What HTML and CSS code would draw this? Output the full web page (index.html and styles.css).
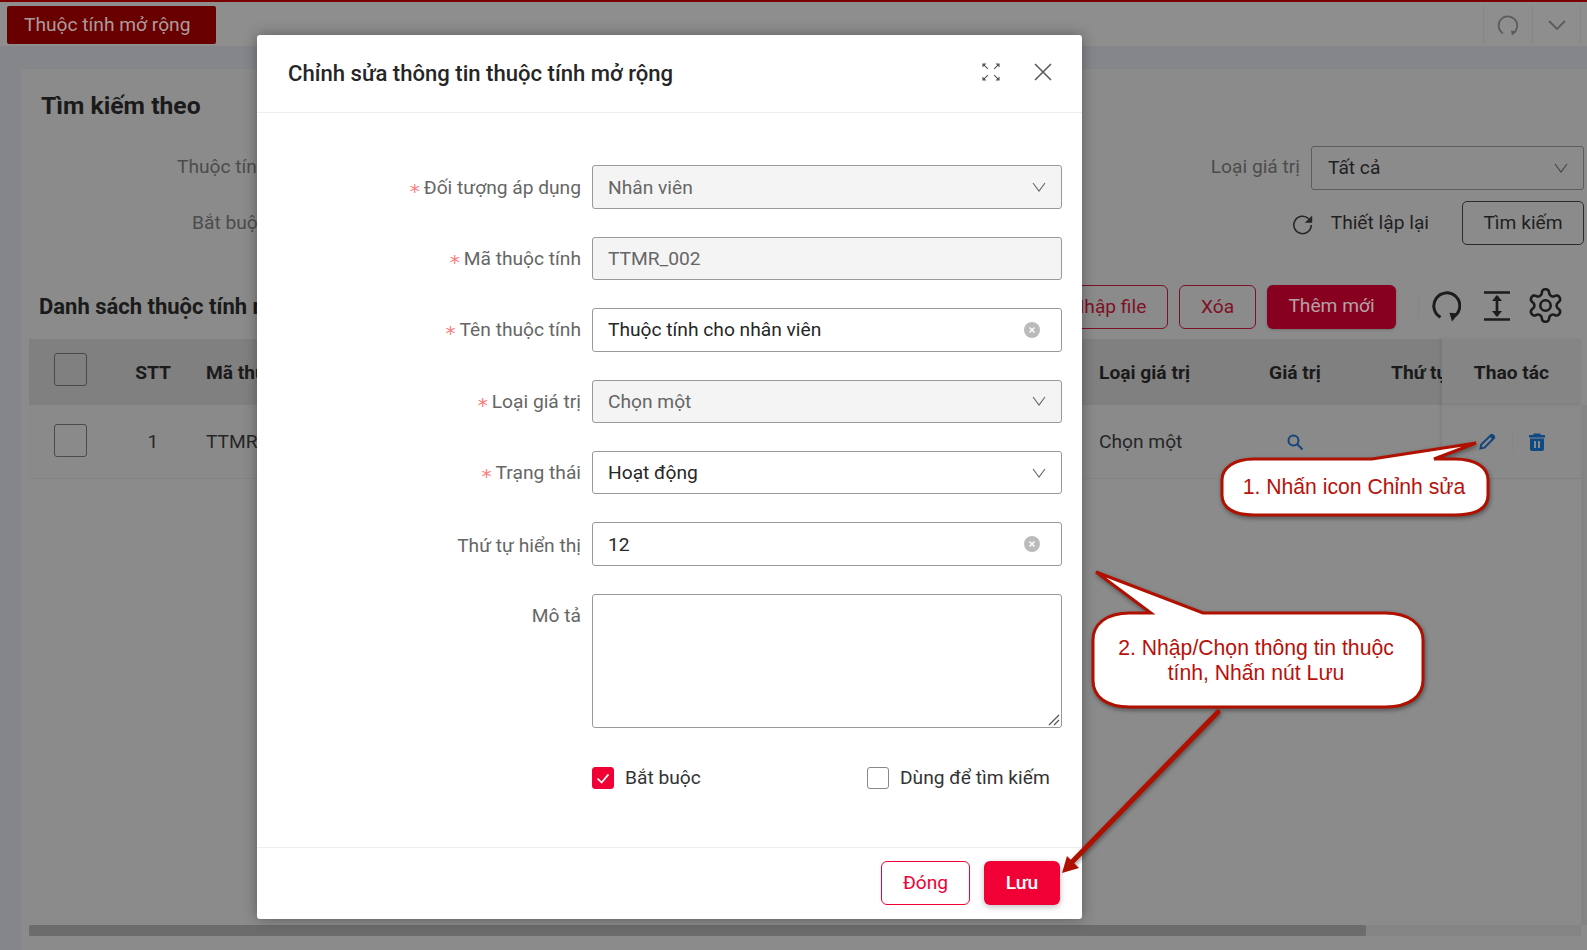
FILE: index.html
```html
<!DOCTYPE html>
<html lang="vi">
<head>
<meta charset="utf-8">
<title>Thuộc tính mở rộng</title>
<link rel="stylesheet" href="styles.css">
</head>
<body>
<div class="page">
  <header class="topbar">
    <div class="tab">Thuộc tính mở rộng</div>
    <div class="top-actions">
      <div class="top-cell"><svg class="i-top" viewBox="0 0 24 24"><path d="M7 20.5A9.3 9.3 0 1 1 17.5 20"/><path class="solid" d="M20.5 18.5l-5.5-1 1 5z"/></svg></div>
      <div class="top-cell"><svg class="i-top" viewBox="0 0 24 24"><path d="M4 8l8 8 8-8"/></svg></div>
    </div>
  </header>
  <main class="card">
    <h2 class="search-title">Tìm kiếm theo</h2>
    <div class="search-row">
      <span class="s-label s-left">Thuộc tính</span>
      <div class="s-right">
        <span class="s-label">Loại giá trị</span>
        <div class="s-select"><span>Tất cả</span><svg class="chev" viewBox="0 0 14 10"><path d="M1 1l6 8 6-8"/></svg></div>
      </div>
    </div>
    <div class="search-row second">
      <span class="s-label s-left short">Bắt buộc</span>
      <div class="s-right">
        <svg class="i-reset" viewBox="0 0 24 24"><path d="M21 12a9.500 9.500 0 1 1-2.800-6.800"/><path class="solid" d="M22 1.500v8h-8z"/></svg>
        <span class="s-reset">Thiết lập lại</span>
        <div class="btn-search">Tìm kiếm</div>
      </div>
    </div>
    <div class="list-bar">
      <h3 class="list-title">Danh sách thuộc tính mở rộng</h3>
      <div class="list-actions">
        <div class="btn-line wide">Nhập file</div>
        <div class="btn-line">Xóa</div>
        <div class="btn-solid">Thêm mới</div>
        <span class="vsep"></span>
        <svg class="i-tool reload" viewBox="0 0 30 32"><path d="M9.500 27.200A13 13 0 1 1 24.500 25.500"/><path class="solid" d="M27.500 23.500l-9-.8 2.500 8.800z"/></svg>
        <svg class="i-tool" viewBox="0 0 30 32"><path d="M2 2.500h26M2 29.500h26M15 6v20"/><path class="solid" d="M15 5l5 6h-10zM15 27l-5-6h10z"/></svg>
        <svg class="i-tool gear" viewBox="0 0 24 24"><path d="M12.220 2h-.44a2 2 0 0 0-2 2v.18a2 2 0 0 1-1 1.730l-.43.25a2 2 0 0 1-2 0l-.15-.08a2 2 0 0 0-2.730.73l-.22.38a2 2 0 0 0 .73 2.730l.15.1a2 2 0 0 1 1 1.720v.51a2 2 0 0 1-1 1.740l-.15.09a2 2 0 0 0-.73 2.730l.22.38a2 2 0 0 0 2.730.73l.15-.08a2 2 0 0 1 2 0l.43.25a2 2 0 0 1 1 1.730V20a2 2 0 0 0 2 2h.44a2 2 0 0 0 2-2v-.18a2 2 0 0 1 1-1.730l.43-.25a2 2 0 0 1 2 0l.15.08a2 2 0 0 0 2.730-.73l.22-.39a2 2 0 0 0-.73-2.730l-.15-.08a2 2 0 0 1-1-1.740v-.5a2 2 0 0 1 1-1.740l.15-.09a2 2 0 0 0 .73-2.730l-.22-.38a2 2 0 0 0-2.730-.73l-.15.08a2 2 0 0 1-2 0l-.43-.25a2 2 0 0 1-1-1.730V4a2 2 0 0 0-2-2z"/><circle cx="12" cy="12" r="3.200"/></svg>
      </div>
    </div>
    <div class="table">
      <div class="t-row t-head">
        <div class="c-check"><span class="box"></span></div>
        <div class="c-stt">STT</div>
        <div class="c-ma">Mã thuộc tính</div>
        <div class="c-ten">Tên thuộc tính</div>
        <div class="c-loai">Loại giá trị</div>
        <div class="c-gt">Giá trị</div>
        <div class="c-tt">Thứ tự hiển thị</div>
        <div class="c-act">Thao tác</div>
      </div>
      <div class="t-row t-body">
        <div class="c-check"><span class="box"></span></div>
        <div class="c-stt">1</div>
        <div class="c-ma">TTMR_002</div>
        <div class="c-ten">Thuộc tính cho nhân viên</div>
        <div class="c-loai">Chọn một</div>
        <div class="c-gt"><svg class="i-blue" viewBox="0 0 18 18"><circle cx="7.500" cy="7.500" r="5"/><path d="M11 11l5.500 5.500"/></svg></div>
        <div class="c-tt"></div>
        <div class="c-act">
          <svg class="i-blue pencil" viewBox="0 0 18 18"><path d="M2.500 15.500l.8-4L12.800 2.200a1.400 1.400 0 0 1 2 0l1 1a1.400 1.400 0 0 1 0 2L6.500 14.700z"/><path class="solid" d="M11.500 3.500l3 3 1.500-1.500a1.400 1.400 0 0 0 0-2l-1-1a1.400 1.400 0 0 0-2 0z"/></svg>
          <span class="act-sep"></span>
          <svg class="i-trash" viewBox="0 0 16 18"><path d="M5 0.500h6l1 1.500H16v2.500H0V2h4zM1 5.500h14V16a2 2 0 0 1-2 2H3a2 2 0 0 1-2-2zM5 8v7h2V8zM9 8v7h2V8z"/></svg>
        </div>
      </div>
    </div>
    <div class="h-track"><div class="h-thumb"></div></div>
    <div class="v-track"></div>
  </main>
</div>

<section class="modal">
  <div class="m-head">
    <h1 class="m-title">Chỉnh sửa thông tin thuộc tính mở rộng</h1>
    <svg class="i-expand" viewBox="0 0 20 20"><path d="M1.500 1.500l5 5M18.500 1.500l-5 5M1.500 18.500l5-5M18.500 18.500l-5-5"/><path class="solid" d="M0.500 0.500h4.500l-4.500 4.500zM19.500 0.500v4.500l-4.500-4.500zM0.500 19.500v-4.500l4.500 4.500zM19.500 19.500h-4.500l4.500-4.500z"/></svg>
    <svg class="i-close" viewBox="0 0 18 18"><path d="M1 1l16 16M17 1L1 17"/></svg>
  </div>
  <div class="m-body">
    <div class="f-row"><label class="f-label"><i>*</i>Đối tượng áp dụng</label><div class="f-input off"><span>Nhân viên</span><svg class="chev" viewBox="0 0 14 10"><path d="M1 1l6 8 6-8"/></svg></div></div>
    <div class="f-row"><label class="f-label"><i>*</i>Mã thuộc tính</label><div class="f-input off"><span>TTMR_002</span></div></div>
    <div class="f-row"><label class="f-label"><i>*</i>Tên thuộc tính</label><div class="f-input"><span>Thuộc tính cho nhân viên</span><svg class="i-clear" viewBox="0 0 16 16"><circle cx="8" cy="8" r="8"/><path d="M5.500 5.500l5 5M10.500 5.500l-5 5"/></svg></div></div>
    <div class="f-row"><label class="f-label"><i>*</i>Loại giá trị</label><div class="f-input off"><span>Chọn một</span><svg class="chev" viewBox="0 0 14 10"><path d="M1 1l6 8 6-8"/></svg></div></div>
    <div class="f-row"><label class="f-label"><i>*</i>Trạng thái</label><div class="f-input"><span>Hoạt động</span><svg class="chev" viewBox="0 0 14 10"><path d="M1 1l6 8 6-8"/></svg></div></div>
    <div class="f-row"><label class="f-label">Thứ tự hiển thị</label><div class="f-input"><span>12</span><svg class="i-clear" viewBox="0 0 16 16"><circle cx="8" cy="8" r="8"/><path d="M5.500 5.500l5 5M10.500 5.500l-5 5"/></svg></div></div>
    <div class="f-row tall"><label class="f-label">Mô tả</label><div class="f-area"><svg class="i-grip" viewBox="0 0 12 12"><path d="M1 11L11 1M6 11l5-5"/></svg></div></div>
    <div class="f-checks">
      <div class="f-check first"><span class="cb on"><svg viewBox="0 0 22 22"><path d="M5 11.500l4.500 4.500 7.500-9"/></svg></span>Bắt buộc</div>
      <div class="f-check"><span class="cb"></span>Dùng để tìm kiếm</div>
    </div>
  </div>
  <div class="m-foot">
    <div class="btn-close">Đóng</div>
    <div class="btn-save">Lưu</div>
  </div>
</section>

<svg class="notes" viewBox="0 0 1587 950">
  <path class="bubble" d="M1254 459L1372 459L1476 443L1434 459L1454 459C1477 459 1488 468 1488 480L1488 495C1488 508 1477 515 1454 515L1254 515C1234 515 1222 508 1222 495L1222 480C1222 468 1234 459 1254 459Z"/>
  <text class="note-text" x="1354" y="494">1. Nhấn icon Chỉnh sửa</text>
  <path class="bubble" d="M1130 613L1151 613L1096 572L1203 613L1385 613C1410 613 1423 625 1423 640L1423 680C1423 696 1410 707 1385 707L1130 707C1105 707 1093 696 1093 680L1093 640C1093 625 1105 613 1130 613Z"/>
  <text class="note-text" x="1256" y="655">2. Nhập/Chọn thông tin thuộc</text>
  <text class="note-text" x="1256" y="680">tính, Nhấn nút Lưu</text>
  <path class="arrow-line" d="M1218 712L1072 862"/>
  <path class="arrow-head" d="M1062 873L1067 856L1079 868Z"/>
</svg>
</body>
</html>
```
FILE: styles.css
```css
* { box-sizing: border-box; }
html, body { margin: 0; height: 100%; overflow: hidden; }
body { font-family: Roboto, "Noto Sans", sans-serif; font-size: 19.200px; color: #1f1f1f; background: #85868a; }
h1, h2, h3 { margin: 0; font-weight: 500; }

.page { height: 950px; display: flex; flex-direction: column; }
.topbar { height: 46px; flex: none; border-top: 2px solid #7a0000; background: #8e8e8e; display: flex; justify-content: space-between; padding: 4px 6px 2px 7px; }
.tab { width: 209px; height: 38px; line-height: 38px; padding-left: 17px; background: #690000; color: #ab9c9c; border-radius: 2px; }
.top-actions { display: flex; }
.top-cell { width: 49px; height: 38px; border-left: 1px solid #858585; display: flex; align-items: center; justify-content: center; }
.top-cell:last-child { border-right: 1px solid #858585; }
.i-top { width: 24px; height: 24px; fill: none; stroke: #5c5c5c; stroke-width: 1.800; }
.i-top .solid { fill: #5c5c5c; stroke: none; }

.card { flex: 1; margin: 23px 0 0 21px; background: #8b8b8b; display: flex; flex-direction: column; position: relative; }
.search-title { font-size: 24.700px; font-weight: 700; line-height: 30px; margin: 22px 0 0 20px; color: #1a1a1a; }
.search-row { height: 44px; margin: 24.500px 3px 0 0; display: flex; align-items: center; justify-content: space-between; }
.search-row.second { margin-top: 11.500px; }
.s-label { color: #4c4c4c; margin-bottom: 2px; }
.s-left { margin-left: 156px; }
.s-left.short { margin-left: 171px; }
.s-right { display: flex; align-items: center; }
.s-select { width: 273px; height: 44px; margin-left: 11px; border: 1px solid #5c5c5c; border-radius: 3px; display: flex; align-items: center; justify-content: space-between; padding: 0 15px 1px 16px; color: #1f1f1f; }
.chev { width: 14px; height: 10px; fill: none; stroke: #666; stroke-width: 1.100; flex: none; }
.s-select .chev { stroke: #444; margin-top: 2px; }
.i-reset { width: 22px; height: 22px; margin-top: 4px; fill: none; stroke: #262626; stroke-width: 1.700; }
.i-reset .solid { fill: #262626; stroke: none; }
.s-reset { margin: 0 33px 2px 17px; color: #1f1f1f; }
.btn-search { width: 122px; height: 44px; line-height: 41px; text-align: center; border: 1px solid #2a2a2a; border-radius: 5px; color: #1f1f1f; }

.list-bar { height: 44px; margin: 40px 0 0 18px; display: flex; align-items: center; justify-content: space-between; padding-right: 22px; }
.list-title { font-size: 22px; font-weight: 700; line-height: 40px; color: #1a1a1a; }
.list-actions { display: flex; align-items: center; }
.btn-line, .btn-solid { height: 44px; line-height: 42px; text-align: center; border-radius: 6px; }
.btn-line { width: 77px; margin-right: 11px; border: 1px solid #7f1026; color: #7f1026; }
.btn-line.wide { width: 128px; padding-left: 9px; }
.btn-solid { width: 129px; background: #880020; color: #b3a1a6; box-shadow: 0 1px 3px rgba(0,0,0,.2); }
.vsep { width: 1px; height: 24px; margin: 0 12px 0 22px; background: #858585; }
.i-tool { width: 30px; height: 32px; margin: 0 0 2px 0; fill: none; stroke: #1c1c1c; stroke-width: 2.700; }
.i-tool .solid { fill: #1c1c1c; stroke: none; }
.i-tool.reload { margin-right: 21px; stroke-width: 3; }
.i-tool.gear { width: 39px; height: 39px; margin: 0 0 3px 14px; stroke-width: 1.600; }

.table { margin: 10px 6px 0 8px; }
.t-row { display: grid; grid-template-columns: 96px 56px 350px 550px 164px 100px 97px 139px; align-items: center; }
.t-head { height: 66px; background: #808080; font-weight: 700; color: #1a1a1a; }
.t-body { height: 74px; border-bottom: 1px solid #858585; background: #8a8a8a; color: #262626; }
.t-row > div { height: 100%; display: flex; align-items: center; white-space: nowrap; overflow: hidden; }
.t-head .c-check { padding-bottom: 5px; }
.t-body .c-check { padding-bottom: 2px; }
.c-check { padding-left: 25px; }
.box { width: 33px; height: 33px; border: 1px solid #4a4a4a; border-radius: 3px; }
.t-row .c-stt, .t-row .c-gt { justify-content: center; }
.c-ma { padding-left: 25px; }
.c-ten { padding-left: 25px; }
.c-loai { padding-left: 18px; }
.c-tt { padding-left: 46px; }
.t-row .c-act { justify-content: center; gap: 13px; box-shadow: -2px 0 3px rgba(0,0,0,.08); }
.t-head .c-act { background: #858585; }
.t-body .c-act { padding-right: 1px; }
.i-blue { width: 18px; height: 18px; fill: none; stroke: #15457d; stroke-width: 2; }
.i-blue .solid { fill: #15457d; stroke: none; }
.act-sep { width: 1px; height: 18px; background: #858585; margin: 0 3px; }
.i-trash { width: 16px; height: 18px; fill: #0f4a85; fill-rule: evenodd; }
.h-track { margin: auto 6px 14px 8px; height: 11px; background: #848484; }
.h-thumb { width: 1337px; height: 11px; background: #6c6c6c; border-radius: 2px; }
.v-track { position: absolute; right: 0; top: 336px; bottom: 25px; width: 6px; background: #848484; }

.modal { position: absolute; left: 257px; top: 35px; width: 825px; height: 884px; background: #fff; border-radius: 3px; box-shadow: 0 0 14px rgba(0,0,0,.35); display: flex; flex-direction: column; }
.m-head { height: 78px; flex: none; border-bottom: 1px solid #eee; display: flex; align-items: center; padding: 0 30px 0 31px; }
.m-title { flex: 1; font-size: 22.100px; color: #262626; margin-bottom: 2px; }
.i-expand { width: 18px; height: 18px; stroke: #555; stroke-width: 1.200; fill: none; margin: -4px 34px 0 0; }
.i-expand .solid { fill: #555; stroke: none; }
.i-close { width: 18px; height: 18px; fill: none; stroke: #555; stroke-width: 1.500; margin-top: -4px; }
.m-body { flex: 1; padding: 52.400px 20px 0 0; display: flex; flex-direction: column; gap: 28px; }
.f-row { display: grid; grid-template-columns: 324px 470px; column-gap: 11px; height: 43.400px; align-items: center; }
.f-row.tall { height: 134px; align-items: start; }
.f-label { text-align: right; color: #666; padding-top: 2px; }
.f-row.tall .f-label { padding-top: 10px; }
.f-label i { font-style: normal; color: #ff7a7a; margin-right: 4px; font-family: "DejaVu Sans", sans-serif; font-size: 20px; line-height: 1; vertical-align: -4px; }
.f-input { height: 43.400px; border: 1px solid #999; border-radius: 3px; display: flex; align-items: center; justify-content: space-between; padding: 0 15px; color: #262626; }
.f-input.off { background: #f4f4f4; color: #666; }
.i-clear { width: 16px; height: 16px; margin-right: 6px; fill: #bbb; }
.i-clear path { stroke: #fff; stroke-width: 1.400; fill: none; }
.f-area { height: 134px; border: 1px solid #999; border-radius: 3px; display: flex; align-items: flex-end; justify-content: flex-end; padding: 0 1px 1px 0; }
.i-grip { width: 12px; height: 12px; fill: none; stroke: #555; stroke-width: 1.200; }
.f-checks { display: flex; margin: 11px 0 0 335px; color: #333; }
.f-check { display: flex; align-items: center; gap: 11px; height: 22px; line-height: 26px; }
.f-check.first { width: 275px; }
.cb { width: 22px; height: 22px; border: 1px solid #888; border-radius: 3px; flex: none; }
.cb.on { background: #f00035; border-color: #f00035; }
.cb svg { display: block; width: 20px; height: 20px; fill: none; stroke: #fff; stroke-width: 1.800; }
.m-foot { height: 72px; flex: none; border-top: 1px solid #eee; display: flex; justify-content: flex-end; align-items: center; gap: 14px; padding: 0 22px 2px 0; }
.btn-close { width: 89px; height: 44px; line-height: 42px; text-align: center; border: 1px solid #f00035; border-radius: 6px; color: #f00035; }
.btn-save { width: 76px; height: 44px; line-height: 43px; text-align: center; background: #f00035; border-radius: 6px; color: #fff; font-weight: 500; box-shadow: 0 2px 6px rgba(0,0,0,.25); }

.notes { position: absolute; left: 0; top: 0; width: 1587px; height: 950px; pointer-events: none; }
.bubble { fill: #fff; stroke: #b01000; stroke-width: 3; filter: drop-shadow(1px 2px 2px rgba(0,0,0,.4)); }
.note-text { font-family: "Liberation Sans", Arial, sans-serif; font-size: 21.200px; fill: #b8110b; text-anchor: middle; }
.arrow-line { stroke: #b01000; stroke-width: 5; fill: none; stroke-linecap: round; filter: drop-shadow(1px 2px 2px rgba(0,0,0,.4)); }
.arrow-head { fill: #b01000; }
```
